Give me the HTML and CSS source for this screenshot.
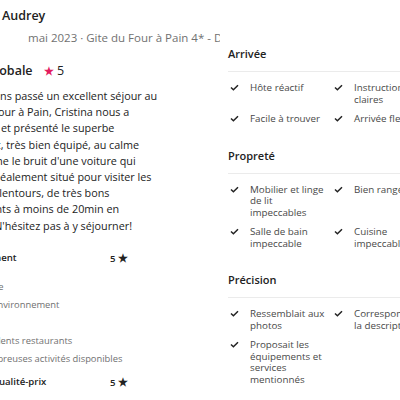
FILE: index.html
```html
<!DOCTYPE html>
<html lang="fr">
<head>
  <meta charset="UTF-8">
  <meta name="viewport" content="width=device-width, initial-scale=1.0">
  <title>Avis - Gite du Four à Pain</title>
  <link rel="stylesheet" href="styles.css">
</head>
<body>

<div class="page">

  <!-- Review -->
  <section class="review">
    <div class="reviewer-name">Audrey</div>
    <div class="review-meta">mai 2023 · Gite du Four à Pain 4* - Dordogne</div>

    <div class="overall">
      <span>Note globale</span>
      <span class="star-red">★</span>
      <span>5</span>
    </div>

    <p class="review-text">
      Nous avons passé un excellent séjour au<br>
      Gîte du Four à Pain, Cristina nous a<br>
      accueillis et présenté le superbe<br>
      logement, très bien équipé, au calme<br>
      (pas même le bruit d'une voiture qui<br>
      passe), idéalement situé pour visiter les<br>
      villes et alentours, de très bons<br>
      restaurants à moins de 20min en<br>
      voiture. N'hésitez pas à y séjourner!
    </p>

    <div class="rating-row">
      <span class="rating-label">Emplacement</span>
      <span class="rating-value">5 <span class="star">★</span></span>
    </div>
    <ul class="rating-tags">
      <li>Calme</li>
      <li>Bel environnement</li>
      <li>Sûr</li>
      <li>Excellents restaurants</li>
      <li>Nombreuses activités disponibles</li>
    </ul>
    <div class="rating-row">
      <span class="rating-label">Rapport qualité-prix</span>
      <span class="rating-value">5 <span class="star">★</span></span>
    </div>
  </section>

  <!-- Highlights -->
  <section class="highlights">

    <div class="group">
      <h3>Arrivée</h3>
      <ul class="checks">
        <li>Hôte réactif</li>
        <li>Instructions claires</li>
        <li>Facile à trouver</li>
        <li>Arrivée flexible</li>
      </ul>
    </div>

    <div class="group">
      <h3>Propreté</h3>
      <ul class="checks">
        <li>Mobilier et linge de lit impeccables</li>
        <li>Bien rangé</li>
        <li>Salle de bain impeccable</li>
        <li>Cuisine impeccable</li>
      </ul>
    </div>

    <div class="group">
      <h3>Précision</h3>
      <ul class="checks">
        <li>Ressemblait aux photos</li>
        <li>Correspondait à la description</li>
        <li>Proposait les équipements et services mentionnés</li>
      </ul>
    </div>

  </section>

</div>

</body>
</html>
```

FILE: styles.css
```css
body {
  margin: 0;
  padding: 0;
  background-color: #fff;
  color: #222;
  font-family: "Open Sans", Arial, sans-serif;
  overflow: hidden;
}

.page {
  display: flex;
  gap: 8px;
  margin-left: -47px;
  width: 600px;
}

/* left column: the review itself */
.review {
  width: 267px;
  flex-shrink: 0;
  overflow: hidden;
  white-space: nowrap;
  padding-top: 7px;
}

.reviewer-name {
  padding-left: 49px;
  font-size: 12.5px;
  font-weight: 600;
  line-height: 18px;
}

.review-meta {
  padding-left: 75px;
  margin-top: 5px;
  font-size: 11.5px;
  line-height: 16px;
  color: #717171;
}

.overall {
  margin-top: 16px;
  padding-left: 3px;
  font-size: 12.5px;
  font-weight: 600;
  line-height: 18px;
}

.overall .star-red {
  color: #e31c5f;
  margin-left: 8px;
  font-size: 11px;
}

.overall span:last-child {
  font-weight: 400;
}

.review-text {
  margin: 8px 0 0;
  font-size: 10.8px;
  line-height: 16.2px;
}

.rating-row {
  display: grid;
  grid-template-columns: 157px auto;
  font-size: 9.6px;
  line-height: 14px;
  margin-top: 17px;
}

.rating-label {
  font-weight: 600;
}

.rating-value {
  font-weight: 600;
}

.rating-value .star {
  font-size: 11px;
}

.rating-tags {
  list-style: none;
  margin: 12px 0 0;
  padding: 0 0 0 23px;
  font-size: 9.4px;
  line-height: 18px;
  color: #717171;
}

.rating-tags + .rating-row {
  margin-top: 7px;
}

/* right column: highlight checklists */
.highlights {
  flex: 1;
  padding-top: 46px;
}

.group {
  margin-bottom: 23px;
}

.group h3 {
  margin: 0;
  font-size: 11px;
  font-weight: 600;
  line-height: 16px;
  padding-bottom: 9px;
  border-bottom: 1px solid #ebebeb;
  width: 260px;
}

.checks {
  list-style: none;
  margin: 10px 0 0;
  padding: 0;
  display: grid;
  grid-template-columns: 104px 104px;
  row-gap: 8px;
  font-size: 9.8px;
  line-height: 11.5px;
  color: #484848;
}

.checks li {
  position: relative;
  padding-left: 22px;
  padding-right: 6px;
}

.checks li::before {
  content: "";
  position: absolute;
  left: 2px;
  top: 2px;
  width: 9px;
  height: 7px;
  background: url("data:image/svg+xml;utf8,<svg xmlns='http://www.w3.org/2000/svg' viewBox='0 0 9 7'><polyline points='1,3.5 3.4,5.8 8,1.2' fill='none' stroke='%23222' stroke-width='1.5'/></svg>") no-repeat;
}
```
